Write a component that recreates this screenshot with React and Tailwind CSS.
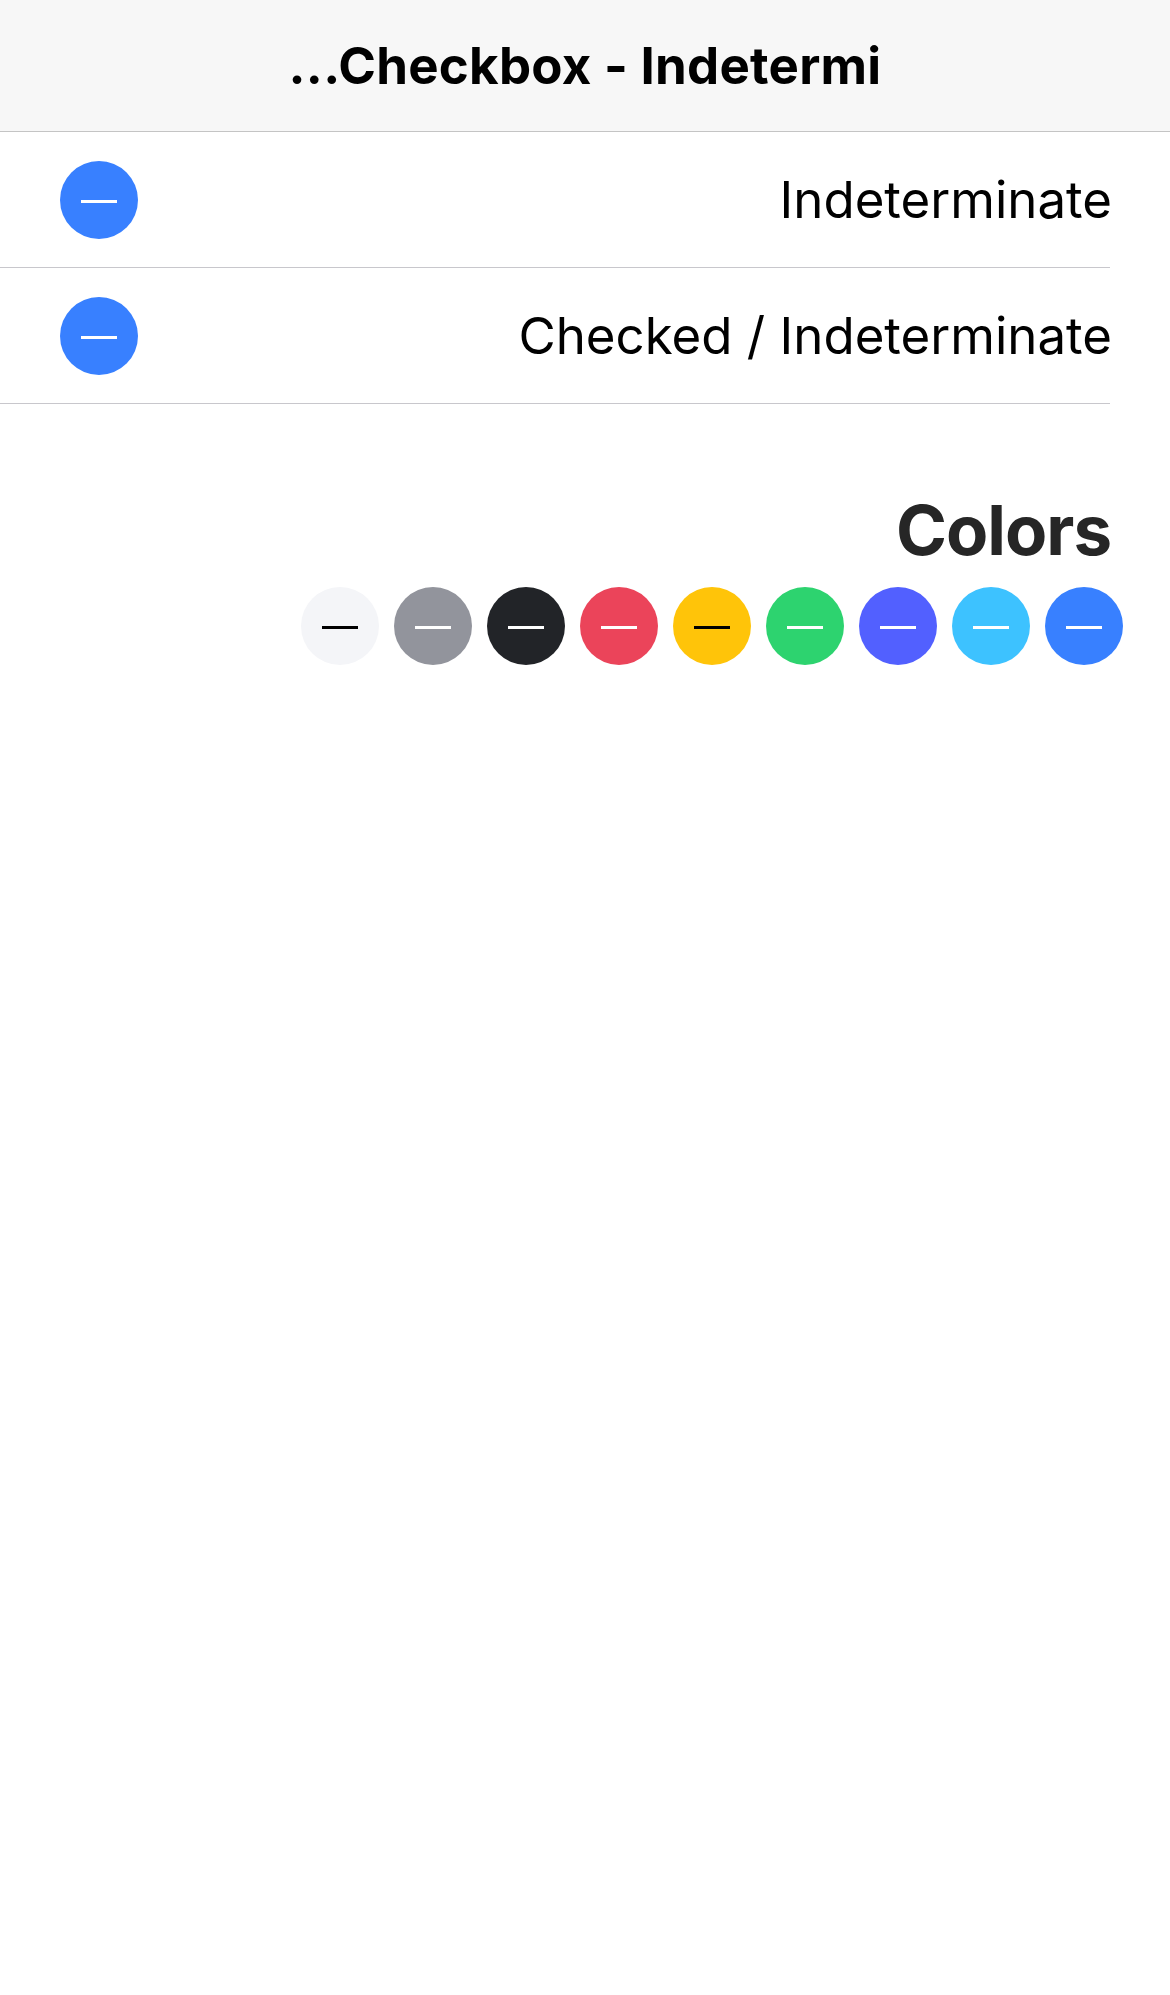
import React from "react";

function Check({ bg, dash }) {
  return (
    <div className={`w-[78px] h-[78px] rounded-full flex items-center justify-center shrink-0 ${bg}`}>
      <div className={`w-[36px] h-[3px] mt-[3px] ${dash}`} />
    </div>
  );
}

const colors = [
  { bg: "bg-[#f4f5f8]", dash: "bg-black" },
  { bg: "bg-[#92949c]", dash: "bg-white" },
  { bg: "bg-[#222428]", dash: "bg-white" },
  { bg: "bg-[#eb445a]", dash: "bg-white" },
  { bg: "bg-[#ffc409]", dash: "bg-black" },
  { bg: "bg-[#2dd36f]", dash: "bg-white" },
  { bg: "bg-[#5260ff]", dash: "bg-white" },
  { bg: "bg-[#3dc2ff]", dash: "bg-white" },
  { bg: "bg-[#3880ff]", dash: "bg-white" },
];

function Row({ label }) {
  return (
    <div className="w-[1110px] h-[136px] border-b border-[#c8c7cc] flex items-center justify-between pl-[60px] pr-0">
      <Check bg="bg-[#3880ff]" dash="bg-white" />
      <span className="text-[51px] text-black leading-none mr-[-2px]">{label}</span>
    </div>
  );
}

export default function App() {
  return (
    <div className="w-[1170px] min-h-[1995px] bg-white font-['Inter',sans-serif]">
      <div className="h-[132px] bg-[#f7f7f7] border-b border-[#c4c4c4] flex items-center justify-center">
        <span className="text-[51px] font-bold text-black leading-none tracking-[0.005em]">...Checkbox - Indetermi</span>
      </div>
      <Row label="Indeterminate" />
      <Row label="Checked / Indeterminate" />
      <div className="pt-[92px]">
        <h2 className="text-right pr-[59px] text-[69px] font-bold leading-none text-[#262626] tracking-[-0.015em]">Colors</h2>
        <div className="flex justify-end gap-[15px] pr-[47px] mt-[22px]">
          {colors.map((c, i) => (
            <Check key={i} bg={c.bg} dash={c.dash} />
          ))}
        </div>
      </div>
    </div>
  );
}
